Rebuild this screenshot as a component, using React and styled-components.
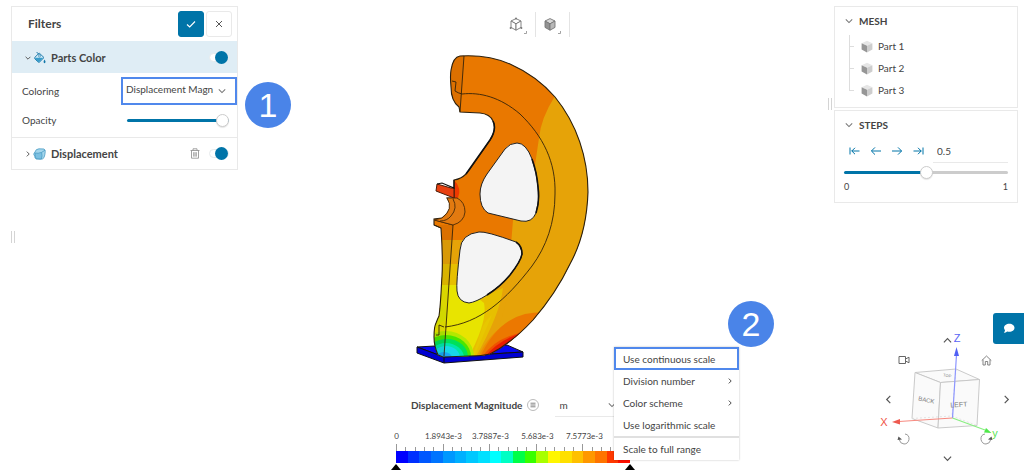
import React, { useState } from "react";
import styled, { createGlobalStyle, css } from "styled-components";

const GlobalStyle = createGlobalStyle`
  *, *::before, *::after { box-sizing: border-box; }
  body {
    margin: 0;
    background: #fff;
    color: #444;
    font-family: Lato, "Liberation Sans", sans-serif;
    font-size: 10px;
    line-height: 16px;
  }
  button, input, select { font: inherit; color: inherit; margin: 0; }
  h1, h2, h3, p, ul { margin: 0; padding: 0; font-size: inherit; }
  svg { display: block; }
`;

const BLUE = "#0074a8";
const LINE = "#e9e9e9";
const MARK = "#5088ec";

const Page = styled.main`
  display: grid;
  grid-template-columns: 238px minmax(330px, 1fr) 196px;
  min-height: 100vh;
`;

const LeftColumn = styled.div`
  display: flex;
  flex-direction: column;
  gap: 61px;
  padding: 6px 0 0 11px;
`;

const RightColumn = styled.div`
  display: flex;
  align-items: flex-start;
  gap: 2px;
  min-width: 0;
  padding: 6px 6px 8px 0;
`;

const RightStack = styled.div`
  display: flex;
  flex: 1;
  flex-direction: column;
  align-self: stretch;
  gap: 2px;
  min-width: 0;
`;

const Handle = styled.div`
  width: 4px;
  height: 12px;
  margin-top: ${(p) => (p.$beside ? "92px" : "0")};
  border: solid #d4d4d4;
  border-width: 0 1px;
`;

const Panel = styled.section`
  border: 1px solid ${LINE};
  background: #fff;
`;

const PanelHead = styled.header`
  display: flex;
  align-items: center;
  gap: 2px;
  height: 34px;
  padding: 0 5px 0 16px;
`;

const PanelTitle = styled.h2`
  flex: 1;
  font-size: 12px;
  font-weight: 700;
`;

const HeadButton = styled.button`
  display: grid;
  place-items: center;
  width: 26px;
  height: 26px;
  padding: 0;
  border: 1px solid ${(p) => (p.$primary ? BLUE : LINE)};
  border-radius: 3px;
  background: ${(p) => (p.$primary ? BLUE : "#fff")};
  color: ${(p) => (p.$primary ? "#fff" : "#555")};
`;

const FilterRow = styled.div`
  display: flex;
  align-items: center;
  gap: 2px;
  height: 32px;
  padding: 0 8px 0 13px;
  background: ${(p) => (p.$active ? "#dfedf5" : "#fff")};
  border-top: 1px solid ${(p) => (p.$active ? "#dfedf5" : LINE)};
`;

const FilterName = styled.h3`
  flex: 1;
  padding-left: 3px;
  font-size: 11px;
  font-weight: 700;
`;

const PlainButton = styled.button`
  display: grid;
  place-items: center;
  padding: 0;
  border: 0;
  background: none;
  color: ${(p) => p.$color || "#555"};
`;

const Toggle = styled.input`
  appearance: none;
  display: flex;
  align-items: center;
  justify-content: flex-end;
  width: 20px;
  height: 9px;
  margin-left: 7px;
  border: 1px solid #e6eaec;
  border-radius: 5px;
  background: #fff;
  &::before {
    content: "";
    flex: none;
    width: 13px;
    height: 13px;
    border-radius: 50%;
    background: ${(p) => (p.checked ? BLUE : "#bbb")};
  }
  &:not(:checked) { justify-content: flex-start; }
`;

const Fields = styled.div`
  display: grid;
  grid-template-columns: 109px 1fr;
  align-items: center;
  row-gap: 2px;
  padding: 4px 0;
`;

const FieldLabel = styled.label`
  padding-left: 10px;
`;

const SelectBox = styled.div`
  position: relative;
  display: flex;
  align-items: center;
`;

const Select = styled.select`
  appearance: none;
  width: 100%;
  border: 0;
  border-radius: 0;
  background: none;
  ${(p) =>
    p.$marked
      ? css`
          height: 28px;
          padding: 0 16px 4px 3px;
          border: 2px solid ${MARK};
        `
      : css`
          height: 24px;
          padding: 0 12px 0 4px;
          border-bottom: 1px solid ${LINE};
        `}
`;

const SelectArrow = styled.span`
  position: absolute;
  right: ${(p) => p.$right}px;
  pointer-events: none;
  color: #777;
`;

const Callout = styled.span`
  position: absolute;
  z-index: 3;
  left: ${(p) => p.$left}px;
  top: ${(p) => p.$top}px;
  display: grid;
  place-items: center;
  width: 46px;
  height: 46px;
  border-radius: 50%;
  background: #4a84e8;
  color: #fff;
  font-family: "Liberation Sans", Arial, sans-serif;
  font-size: 34px;
  line-height: 46px;
`;

const Range = styled.input`
  appearance: none;
  display: block;
  width: 100%;
  height: 14px;
  background: none;
  &::-webkit-slider-runnable-track {
    height: 3px;
    border-radius: 2px;
    background: linear-gradient(
      to right,
      ${BLUE} ${(p) => p.$fill}%,
      #ccc ${(p) => p.$fill}%
    );
  }
  &::-webkit-slider-thumb {
    appearance: none;
    width: 13px;
    height: 13px;
    margin-top: -5px;
    border: 1px solid #ccc;
    border-radius: 50%;
    background: #fff;
    box-shadow: 0 1px 1px rgba(0, 0, 0, 0.1);
  }
`;

const OpacityCell = styled.div`
  padding: 0 8px 0 6px;
  height: 26px;
  display: flex;
  align-items: center;
`;

const GroupTitle = styled.h2`
  display: flex;
  align-items: center;
  gap: 6px;
  height: 28px;
  padding-left: 10px;
  font-weight: 700;
  & svg { color: #777; }
`;

const Tree = styled.ul`
  list-style: none;
  margin: 0 0 6px 14px;
`;

const TreeItem = styled.li`
  display: flex;
  align-items: center;
  gap: 5px;
  height: 22px;
  background:
    linear-gradient(#ddd, #ddd) 0 0 / 1px ${(p) => (p.$last ? "50%" : "100%")} no-repeat,
    linear-gradient(#ddd, #ddd) 0 50% / 5px 1px no-repeat;
  &::before {
    content: "";
    width: 7px;
  }
`;

const StepRow = styled.div`
  display: flex;
  align-items: center;
  gap: 9px;
  padding: 0 9px 0 14px;
`;

const StepInput = styled.input`
  flex: 1;
  min-width: 0;
  height: 24px;
  padding: 0 4px;
  border: 0;
  border-bottom: 1px solid ${LINE};
  background: none;
`;

const StepRange = styled.div`
  padding: 2px 9px 8px;
`;

const RangeEnds = styled.div`
  display: flex;
  justify-content: space-between;
  font-size: 9px;
  line-height: 15px;
`;

const Stage = styled.section`
  display: flex;
  flex-direction: column;
  align-items: center;
  padding: 12px 0 4px 6px;
`;

const Toolbar = styled.div`
  display: flex;
  height: 25px;
`;

const ToolButton = styled.button`
  display: grid;
  place-items: center;
  width: 34px;
  padding: 0 3px 0 0;
  border: 0;
  border-right: 1px solid #e4e4e4;
  background: none;
`;

const ModelSvg = styled.svg`
  width: 300px;
  height: 318px;
  margin-top: 13px;
`;

const Legend = styled.div`
  position: relative;
  width: 326px;
  margin-top: 25px;
`;

const LegendHead = styled.div`
  display: flex;
  align-items: center;
  height: 24px;
  padding-left: 38px;
`;

const LegendTitle = styled.h2`
  font-weight: 700;
`;

const RoundButton = styled.button`
  display: grid;
  place-items: center;
  width: 12px;
  height: 12px;
  margin: 0 16px 0 5px;
  padding: 0;
  border: 1px solid #bbb;
  border-radius: 50%;
  background: #fff;
`;

const UnitBox = styled(SelectBox)`
  width: 62px;
`;

const Values = styled.div`
  display: grid;
  grid-template-columns: repeat(5, 47px);
  margin-top: 12px;
  font-size: 8px;
  line-height: 14px;
  text-align: center;
`;

const Scale = styled.div`
  width: 234px;
  margin: 1px 0 0 23px;
`;

const Ticks = styled.div`
  display: flex;
  align-items: flex-end;
  justify-content: space-between;
  height: 7px;
`;

const Tick = styled.i`
  width: 1px;
  height: ${(p) => (p.$major ? 7 : 4)}px;
  background: #999;
`;

const ColorBar = styled.div`
  display: flex;
  height: 12px;
`;

const Swatch = styled.i`
  flex: 1;
  background: ${(p) => p.$color};
`;

const Markers = styled.div`
  display: flex;
  justify-content: space-between;
  margin: 0 -5px;
`;

const Marker = styled.i`
  border: solid transparent;
  border-width: 1px 5px 6px;
  border-bottom-color: #000;
`;

const Menu = styled.div`
  position: absolute;
  z-index: 2;
  left: 241px;
  top: -46px;
  width: 125px;
  background: #fff;
  box-shadow: 0 0 2px rgba(0, 0, 0, 0.25);
`;

const MenuItem = styled.button`
  display: flex;
  align-items: center;
  justify-content: space-between;
  width: 100%;
  height: ${(p) => (p.$marked ? 23 : 22)}px;
  padding: 0 ${(p) => (p.$marked ? 4 : 6)}px 0 ${(p) => (p.$marked ? 7 : 9)}px;
  border: ${(p) => (p.$marked ? `2px solid ${MARK}` : "0")};
  background: #fff;
  text-align: left;
  white-space: nowrap;
`;

const MenuRule = styled.hr`
  height: 2px;
  margin: 0;
  border: 0;
  background: #e0e0e0;
`;

const Navigator = styled.div`
  position: relative;
  display: grid;
  grid-template-columns: 16px 16px 1fr 16px 20px;
  grid-template-rows: 20px 16px 63px 16px 19px;
  align-self: flex-end;
  width: 134px;
  margin: auto 4px 0 0;
`;

const NavButton = styled(PlainButton)`
  grid-area: ${(p) => p.$area};
  place-self: ${(p) => p.$place || "center"};
  width: 16px;
  height: 16px;
`;

const CubeSvg = styled.svg`
  grid-area: 1 / 1 / -1 / -1;
  width: 134px;
  height: 134px;
  pointer-events: none;
`;

const ChatButton = styled.button`
  position: absolute;
  top: -19px;
  right: -10px;
  display: grid;
  place-items: center;
  width: 31px;
  height: 31px;
  padding: 0;
  border: 0;
  border-radius: 3px 0 0 3px;
  background: ${BLUE};
  color: #fff;
`;

const CHEVRONS = {
  down: "M1 3 L5 7 L9 3",
  up: "M1 7 L5 3 L9 7",
  left: "M7 1 L3 5 L7 9",
  right: "M3 1 L7 5 L3 9",
};

function Chevron({ dir, size = 8, weight = 1.3 }) {
  return (
    <svg width={size} height={size} viewBox="0 0 10 10" fill="none" stroke="currentColor" strokeWidth={weight}>
      <path d={CHEVRONS[dir]} />
    </svg>
  );
}

function StepArrow({ back, stop }) {
  return (
    <svg width="12" height="10" viewBox="0 0 12 10" fill="none" stroke="currentColor" strokeWidth="1">
      <g transform={back ? undefined : "translate(12 0) scale(-1 1)"}>
        <path d={stop ? "M2.6 5H10.5M6 1.8L2.8 5L6 8.2M1 1.5V8.5" : "M1.5 5H11M5 1.4L1.4 5L5 8.6"} />
      </g>
    </svg>
  );
}

function BucketIcon() {
  return (
    <svg width="13" height="13" viewBox="0 0 13 13">
      <path d="M2 6.2L6.2 2L11 6.6L6.4 11.2Q5.6 11.6 4.8 10.8L2 8Q1.2 7 2 6.2Z" fill="#d3edf8" stroke="#287fae" />
      <path d="M2.2 6.8H10.4L6.3 10.9Q5.5 11.2 4.8 10.4L2.2 8Z" fill="#389cc9" />
      <path d="M3.6 1L7 4.6" stroke="#287fae" fill="none" />
      <circle cx="6.5" cy="5" r="1" fill="#fff" stroke="#287fae" strokeWidth=".7" />
      <path d="M11.5 8.5Q13 10.6 12.4 11.6Q11.5 12.7 10.7 11.6Q10.2 10.6 11.5 8.5Z" fill="#1278aa" />
    </svg>
  );
}

function DisplaceIcon() {
  return (
    <svg width="13" height="12" viewBox="0 0 13 12" stroke="#4a9cc4" strokeWidth=".8">
      <path d="M2 4Q2.6 1 6 .8L11 1Q12.6 1.6 12.2 4Q12 7 11 9.6Q10 11.4 7.4 11.2L3 10.8Q1.6 10 1.8 8.2L.8 6.6Q.8 4.8 2 4Z" fill="#a4d6ec" />
      <path d="M2 5Q5 5.8 8.6 4.4Q9.6 7.6 8.4 11L3 10.8Q1.8 8 2 5Z" fill="#7cc0e1" />
      <path d="M8.6 4.4L12 2.2" fill="none" />
    </svg>
  );
}

function TrashIcon() {
  return (
    <svg width="10" height="11" viewBox="0 0 10 11" fill="none" stroke="#8a8a8a">
      <path d="M.5 2.5H9.5M3 2.5V.8H7V2.5M1.5 2.5V10.2H8.5V2.5M3.7 4.2V8.6M5 4.2V8.6M6.3 4.2V8.6" strokeWidth=".8" />
    </svg>
  );
}

function PartCube() {
  return (
    <svg width="12" height="13" viewBox="0 0 12 13">
      <path d="M6 .7L11.4 3.2L6 5.8L.6 3.2Z" fill="#e6e6e6" />
      <path d="M.6 3.2L6 5.8V12.4L.6 9.6Z" fill="#969696" />
      <path d="M11.4 3.2L6 5.8V12.4L11.4 9.6Z" fill="#cdcdcd" />
    </svg>
  );
}

function ToolCube({ solid }) {
  return (
    <svg width="22" height="20" viewBox="0 0 22 20" stroke="#777" strokeWidth=".9" strokeLinejoin="round">
      <path d="M10 3.6L15 6L10 8.8L5 6Z" fill={solid ? "#d8d8d8" : "#fff"} />
      <path d="M5 6L10 8.8V15.2L5 12.4Z" fill={solid ? "#929292" : "#fff"} />
      <path d="M15 6L10 8.8V15.2L15 12.4Z" fill={solid ? "#b8b8b8" : "#fff"} />
      {!solid && (
        <g fill="#777" stroke="none">
          <circle cx="10" cy="3.4" r="1" />
          <circle cx="4.6" cy="13" r="1" />
          <circle cx="15.4" cy="13" r="1" />
        </g>
      )}
      <path d="M20.5 16V18.5H18" fill="none" stroke="#999" />
    </svg>
  );
}

const BODY =
  "M460 56C476 55 494 57 510 64C528 72 542 82 555 97C577 124 588 158 588 192C587 222 581 244 570 264C559 287 546 305 533 320C520 334 508 345 490 354C482 356 474 356 470 356L443 357L438 355Q434 346 434 337Q434 327 436 323Q438 318 439 316C441 302 441 290 442 276C443 258 442 243 441 228L434 225V219L442 218Q448 214 450 208Q451 203 447 198L454 198V180Q461 179 466 174L470 169L490 140Q497 129 493 121Q490 114 480 113L460 112L459 107Q451 101 451 87Q450 76 451 70Q453 57 460 56Z";
const HOLE_TOP =
  "M517 143Q510 143 505 149L487 174Q480 184 480 194Q480 208 488 213L521 221Q532 223 536 213Q540 201 538 187Q537 173 532 159Q526 143 517 143Z";
const HOLE_LOW =
  "M479 232Q486 231 516 242Q522 246 522 254Q521 261 510 275Q500 287 487 295Q476 302 469 303Q458 302 457 291Q456 283 460 250Q461 234 479 232Z";

function WheelModel() {
  return (
    <ModelSvg viewBox="386 50 300 318" role="img" aria-label="Displacement result on wheel">
      <defs>
        <clipPath id="body">
          <path d={BODY} />
        </clipPath>
      </defs>
      <g stroke="#111" strokeWidth="1" strokeLinejoin="round">
        <path d="M417 347L435 346L507 345L523 352L444 357Z" fill="#0808f4" />
        <path d="M417 347L444 357L523 352V357L444 363L417 353Z" fill="#0000d2" />
        <path d="M444 357V363" />
      </g>
      <g clipPath="url(#body)">
        <path d="M410 50H600V370H410Z" fill="#e97800" />
        <path d="M555 96Q541 118 539 138L535 165L513 220L511 245L503 280L480 357H600V96Z" fill="#e6a308" />
        <path d="M430 240H463L480 270H515L490 360H430Z" fill="#e6a308" />
        <path d="M430 264H470L486 295L503 288Q500 315 474 360H430Z" fill="#e7bf00" />
        <path d="M430 285H462L484 303Q488 322 467 360H430Z" fill="#e8e400" />
        <path d="M430 303Q440 295 448 318L430 330Z" fill="#dfe600" />
        <path d="M472 357L482 329Q484 322 492 315L474 357Z" fill="#e7c700" />
        <path d="M478 357Q492 326 522 316L545 312V345L510 365Z" fill="#ec9000" />
        <path d="M480 357Q497 321 525 314Q540 311 552 313L520 350L490 365Z" fill="#ec7800" />
        <path d="M482 357Q497 335 530 331L508 352Z" fill="#f05000" />
        <path d="M484 358Q500 337 528 332L508 354Z" fill="#e81c00" />
        <ellipse cx="446" cy="357" rx="28" ry="26" fill="#b4e800" />
        <ellipse cx="446" cy="357" rx="25" ry="22" fill="#4ae600" />
        <ellipse cx="447" cy="357" rx="21" ry="18" fill="#00e05a" />
        <ellipse cx="446" cy="358" rx="18" ry="15" fill="#00e6aa" />
        <ellipse cx="446" cy="358" rx="14" ry="12" fill="#18d8e8" />
        <ellipse cx="444" cy="358" rx="8" ry="6" fill="#18a8f4" />
        <path d="M454 180Q462 188 458 198H454Z" fill="#ee3900" />
        <path d="M451 55H464L460 112L451 108Z" fill="#dc7000" />
        <path d="M434 225L453 225L444 356H430V225Z" fill="#000" opacity=".06" />
      </g>
      <path d={HOLE_TOP} fill="#f4f4f4" stroke="#222" />
      <path d={HOLE_LOW} fill="#f4f4f4" stroke="#222" />
      <path d={BODY} fill="none" stroke="#2a2010" strokeWidth="1.1" />
      <path d="M532 159Q537 173 538 187Q540 201 536 213M516 242Q522 246 522 254Q521 261 510 275Q500 287 487 295M466 174L490 140Q497 129 493 121" fill="none" stroke="#111" strokeWidth="1.6" />
      <g fill="none" stroke="#33220a" strokeWidth=".9">
        <path d="M464 56L460 112" />
        <path d="M452 81L456 82L455 91Q458 93 462 94C480 92 500 97 520 114C543 136 556 162 555 194C555 223 546 247 532 266C506 300 480 323 445 327" />
        <path d="M435 220L453 225L444 356M434 225L441 228" />
        <path d="M436 335H439V325L444 327" />
      </g>
      <path d="M447 198H457Q465 202 465 212Q464 222 453 225L434 220L442 218Q454 209 447 198Z" fill="#e27a10" stroke="#4a2a08" strokeWidth=".9" />
      <path d="M453 199Q458 208 451 216Q447 221 440 221" fill="none" stroke="#4a2a08" strokeWidth=".9" />
      <path d="M437 184L451 188H454V198L436 191Z" fill="#e84010" stroke="#4a1c08" strokeWidth="1" />
      <path d="M437 184L442 183L454 188V180" fill="none" stroke="#111" strokeWidth="1.2" />
    </ModelSvg>
  );
}

function ViewCube() {
  return (
    <CubeSvg viewBox="880 331 134 134">
      <g fill="#fafafa" stroke="#c4c4c4" strokeWidth=".9" strokeLinejoin="round">
        <path d="M915 371.5L956 368L979.5 378.5L940.5 381.5Z" />
        <path d="M915 371.5L940.5 381.5L938 427L912 417.5Z" />
        <path d="M940.5 381.5L979.5 378.5L977 424.5L938 427Z" />
      </g>
      <path d="M912 417.5L952 415L977 424.5M956 368L952 415" fill="none" stroke="#ddd" strokeDasharray="2 2" strokeWidth=".8" />
      <path d="M952.5 417L956.5 354" stroke="#8c95ff" strokeWidth="1.2" />
      <path d="M956.5 346L959 355H954Z" fill="#5060f5" />
      <path d="M952.5 417L899 420.5" stroke="#f78a80" strokeWidth="1.2" />
      <path d="M892 421L900 418V423.5Z" fill="#ee5a50" />
      <path d="M952.5 417L985 429" stroke="#88ef80" strokeWidth="1.2" />
      <path d="M991.5 432L984 431.5L986 427Z" fill="#4fe84a" />
      <g fontFamily="Liberation Sans, sans-serif" textAnchor="middle">
        <g fontSize="11">
          <text x="957" y="341" fill="#5a64f5">Z</text>
          <text x="884" y="425" fill="#ef5548">X</text>
          <text x="995" y="436" fill="#5be452">y</text>
        </g>
        <g fill="#777">
          <text fontSize="6" transform="translate(926 401) rotate(12)">BACK</text>
          <text fontSize="7" transform="translate(959 406) rotate(-4)">LEFT</text>
          <text fontSize="4" transform="translate(947 376) rotate(10)">TOP</text>
        </g>
      </g>
    </CubeSvg>
  );
}

function RotateIcon({ flip }) {
  return (
    <svg width="14" height="14" viewBox="0 0 14 14">
      <g transform={flip ? "translate(14 0) scale(-1 1)" : undefined}>
        <path d="M8 2Q12.5 2.8 12 7.5Q11 12 7 12Q3 11.7 2.2 7.5" fill="none" stroke="#999" />
        <path d="M.5 8L1.5 4.5L5 7.5Z" fill="#555" />
      </g>
    </svg>
  );
}

const SCALE_COLORS = [
  "#0000ff", "#0030ff", "#0058ff", "#0074ff", "#0098ff", "#00b0ff", "#00c8ff",
  "#00e0ff", "#00ffff", "#00ffc4", "#00ff48", "#38ff00", "#a8ff00", "#fff600",
  "#ffe000", "#ffc000", "#ff9800", "#ff7400", "#ff3800", "#ff1000",
];
const SCALE_VALUES = ["0", "1.8943e-3", "3.7887e-3", "5.683e-3", "7.5773e-3"];
const PARTS = ["Part 1", "Part 2", "Part 3"];

function FiltersPanel() {
  const [colorOn, setColorOn] = useState(true);
  const [moveOn, setMoveOn] = useState(true);
  const [opacity, setOpacity] = useState(100);
  return (
    <Panel>
      <PanelHead>
        <PanelTitle>Filters</PanelTitle>
        <HeadButton $primary aria-label="Apply">
          <svg width="12" height="12" viewBox="0 0 12 12" fill="none" stroke="currentColor" strokeWidth="1.1">
            <path d="M2 6.5L4.7 9L10 3.5" />
          </svg>
        </HeadButton>
        <HeadButton aria-label="Close">
          <svg width="8" height="8" viewBox="0 0 8 8" stroke="currentColor">
            <path d="M1 1L7 7M7 1L1 7" />
          </svg>
        </HeadButton>
      </PanelHead>
      <FilterRow $active>
        <PlainButton aria-label="Collapse Parts Color"><Chevron dir="down" size={6} weight={1.6} /></PlainButton>
        <BucketIcon />
        <FilterName>Parts Color</FilterName>
        <Toggle type="checkbox" aria-label="Parts Color" checked={colorOn} onChange={(e) => setColorOn(e.target.checked)} />
      </FilterRow>
      <Fields>
        <FieldLabel htmlFor="coloring">Coloring</FieldLabel>
        <SelectBox>
          <Select id="coloring" $marked>
            <option>Displacement Magn</option>
          </Select>
          <SelectArrow $right={11}><Chevron dir="down" /></SelectArrow>
          <Callout $left={124} $top={5}>1</Callout>
        </SelectBox>
        <FieldLabel htmlFor="opacity">Opacity</FieldLabel>
        <OpacityCell>
          <Range id="opacity" type="range" value={opacity} $fill={opacity} onChange={(e) => setOpacity(e.target.value)} />
        </OpacityCell>
      </Fields>
      <FilterRow>
        <PlainButton aria-label="Expand Displacement"><Chevron dir="right" size={6} weight={1.6} /></PlainButton>
        <DisplaceIcon />
        <FilterName>Displacement</FilterName>
        <PlainButton aria-label="Delete"><TrashIcon /></PlainButton>
        <Toggle type="checkbox" aria-label="Displacement" checked={moveOn} onChange={(e) => setMoveOn(e.target.checked)} />
      </FilterRow>
    </Panel>
  );
}

function MeshPanel() {
  return (
    <Panel>
      <GroupTitle><Chevron dir="down" />MESH</GroupTitle>
      <Tree>
        {PARTS.map((name, i) => (
          <TreeItem key={name} $last={i === PARTS.length - 1}>
            <PartCube />
            {name}
          </TreeItem>
        ))}
      </Tree>
    </Panel>
  );
}

function StepsPanel() {
  const [step, setStep] = useState("0.5");
  return (
    <Panel>
      <GroupTitle><Chevron dir="down" />STEPS</GroupTitle>
      <StepRow>
        <PlainButton $color={BLUE} aria-label="First step"><StepArrow back stop /></PlainButton>
        <PlainButton $color={BLUE} aria-label="Previous step"><StepArrow back /></PlainButton>
        <PlainButton $color={BLUE} aria-label="Next step"><StepArrow /></PlainButton>
        <PlainButton $color={BLUE} aria-label="Last step"><StepArrow stop /></PlainButton>
        <StepInput aria-label="Step" value={step} onChange={(e) => setStep(e.target.value)} />
      </StepRow>
      <StepRange>
        <Range type="range" aria-label="Step position" min="0" max="1" step="0.1" value={step} $fill={step * 100} onChange={(e) => setStep(e.target.value)} />
        <RangeEnds><span>0</span><span>1</span></RangeEnds>
      </StepRange>
    </Panel>
  );
}

function ColorLegend() {
  return (
    <Legend>
      <LegendHead>
        <LegendTitle>Displacement Magnitude</LegendTitle>
        <RoundButton aria-label="Scale options">
          <svg width="6" height="6" viewBox="0 0 6 6" stroke="#666" strokeWidth=".8">
            <path d="M.5 1.2H5.5M.5 3H5.5M.5 4.8H5.5" />
          </svg>
        </RoundButton>
        <UnitBox>
          <Select aria-label="Unit"><option>m</option></Select>
          <SelectArrow $right={1}><Chevron dir="down" /></SelectArrow>
        </UnitBox>
      </LegendHead>
      <Values>
        {SCALE_VALUES.map((v) => <span key={v}>{v}</span>)}
      </Values>
      <Scale>
        <Ticks>
          {Array.from({ length: 26 }, (_, i) => <Tick key={i} $major={i % 5 === 0} />)}
        </Ticks>
        <ColorBar>
          {SCALE_COLORS.map((c) => <Swatch key={c} $color={c} />)}
        </ColorBar>
        <Markers><Marker /><Marker /></Markers>
      </Scale>
      <Menu>
        <MenuItem $marked>Use continuous scale</MenuItem>
        <MenuItem>Division number<Chevron dir="right" size={6} weight={1.6} /></MenuItem>
        <MenuItem>Color scheme<Chevron dir="right" size={6} weight={1.6} /></MenuItem>
        <MenuItem>Use logarithmic scale</MenuItem>
        <MenuRule />
        <MenuItem>Scale to full range</MenuItem>
        <Callout $left={114} $top={-46}>2</Callout>
      </Menu>
    </Legend>
  );
}

function ViewNavigator() {
  return (
    <Navigator>
      <ViewCube />
      <NavButton $area="1 / 1 / 2 / -1" $place="start center" aria-label="Tilt up"><Chevron dir="up" size={9} /></NavButton>
      <NavButton $area="2 / 2" aria-label="Camera">
        <svg width="12" height="10" viewBox="0 0 12 10" fill="none" stroke="#666">
          <path d="M1 1.5H7.5V8.5H1ZM7.5 4L11 2.2V7.8L7.5 6" />
        </svg>
      </NavButton>
      <NavButton $area="2 / 4" aria-label="Home view">
        <svg width="11" height="11" viewBox="0 0 11 11" fill="none" stroke="#777" strokeWidth=".9">
          <path d="M.7 5.6L5.5 1L10.3 5.6M2 4.6V10H4.3V6.5H6.7V10H9V4.6" />
        </svg>
      </NavButton>
      <NavButton $area="3 / 1" aria-label="Turn left"><Chevron dir="left" size={9} /></NavButton>
      <NavButton $area="3 / 5" $place="center end" aria-label="Turn right"><Chevron dir="right" size={9} /></NavButton>
      <NavButton $area="4 / 2" aria-label="Roll left"><RotateIcon /></NavButton>
      <NavButton $area="4 / 4" aria-label="Roll right"><RotateIcon flip /></NavButton>
      <NavButton $area="5 / 1 / 6 / -1" $place="end center" aria-label="Tilt down"><Chevron dir="down" size={9} /></NavButton>
      <ChatButton aria-label="Chat">
        <svg width="12" height="11" viewBox="0 0 12 11" fill="currentColor">
          <path d="M6.3 .8C9.3 .8 11.5 2.5 11.5 4.8C11.5 7.2 9.3 8.8 6.3 8.8Q5.2 8.8 4.2 8.5Q2.8 9.8 .8 9.8Q1.9 8.6 2 7.3Q1 6.2 1 4.8C1 2.5 3.3 .8 6.3 .8Z" />
        </svg>
      </ChatButton>
    </Navigator>
  );
}

export default function App() {
  return (
    <>
      <GlobalStyle />
      <Page>
        <LeftColumn>
          <FiltersPanel />
          <Handle />
        </LeftColumn>
        <Stage>
          <Toolbar>
            <ToolButton aria-label="Wireframe view"><ToolCube /></ToolButton>
            <ToolButton aria-label="Solid view"><ToolCube solid /></ToolButton>
          </Toolbar>
          <WheelModel />
          <ColorLegend />
        </Stage>
        <RightColumn>
          <Handle $beside />
          <RightStack>
            <MeshPanel />
            <StepsPanel />
            <ViewNavigator />
          </RightStack>
        </RightColumn>
      </Page>
    </>
  );
}
